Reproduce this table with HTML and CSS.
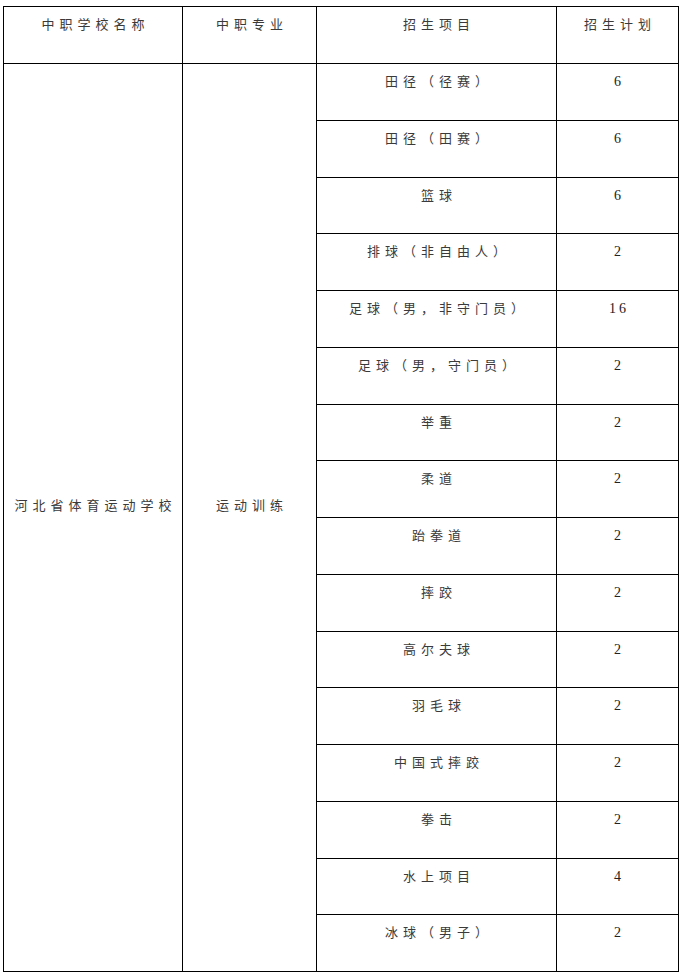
FILE: index.html
```html
<!DOCTYPE html>
<html lang="zh">
<head>
<meta charset="utf-8">
<title>招生计划</title>
<link rel="stylesheet" href="styles.css">
</head>
<body>
<table class="plan">
  <colgroup>
    <col class="c-school">
    <col class="c-major">
    <col class="c-item">
    <col class="c-num">
  </colgroup>
  <thead>
    <tr class="head">
      <th>中职学校名称</th>
      <th>中职专业</th>
      <th>招生项目</th>
      <th>招生计划</th>
    </tr>
  </thead>
  <tbody>
    <tr><td class="span" rowspan="16">河北省体育运动学校</td><td class="span" rowspan="16">运动训练</td><td>田径（径赛）</td><td class="num">6</td></tr>
    <tr><td>田径（田赛）</td><td class="num">6</td></tr>
    <tr><td>篮球</td><td class="num">6</td></tr>
    <tr><td>排球（非自由人）</td><td class="num">2</td></tr>
    <tr><td>足球（男，非守门员）</td><td class="num">16</td></tr>
    <tr><td>足球（男，守门员）</td><td class="num">2</td></tr>
    <tr><td>举重</td><td class="num">2</td></tr>
    <tr><td>柔道</td><td class="num">2</td></tr>
    <tr><td>跆拳道</td><td class="num">2</td></tr>
    <tr><td>摔跤</td><td class="num">2</td></tr>
    <tr><td>高尔夫球</td><td class="num">2</td></tr>
    <tr><td>羽毛球</td><td class="num">2</td></tr>
    <tr><td>中国式摔跤</td><td class="num">2</td></tr>
    <tr><td>拳击</td><td class="num">2</td></tr>
    <tr><td>水上项目</td><td class="num">4</td></tr>
    <tr><td>冰球（男子）</td><td class="num">2</td></tr>
  </tbody>
</table>
</body>
</html>
```

FILE: styles.css
```css
html, body {
  margin: 0;
  padding: 0;
  background: #ffffff;
}

body {
  font-family: "Liberation Serif", "Noto Sans CJK SC", serif;
  font-size: 13px;
  color: #3a3a3a;
}

.plan {
  margin: 6px 0 0 3px;
  border-collapse: collapse;
  table-layout: fixed;
  width: 676px;
}

.c-school { width: 179px; }
.c-major { width: 134px; }
.c-item { width: 240px; }
.c-num { width: 122px; }

.plan th,
.plan td {
  border: 1px solid #000;
  padding: 9px 0 0 5px;
  height: 56.75px;
  box-sizing: border-box;
  line-height: 17px;
  text-align: center;
  vertical-align: top;
  letter-spacing: 5px;
  font-weight: normal;
  white-space: nowrap;
}

.plan .head th {
  height: 57px;
}

.plan td.num {
  font-size: 14px;
  color: #222;
  letter-spacing: 3px;
  padding-left: 3px;
}

.plan td.span {
  vertical-align: middle;
  padding-top: 0;
  padding-bottom: 24px;
}
```
